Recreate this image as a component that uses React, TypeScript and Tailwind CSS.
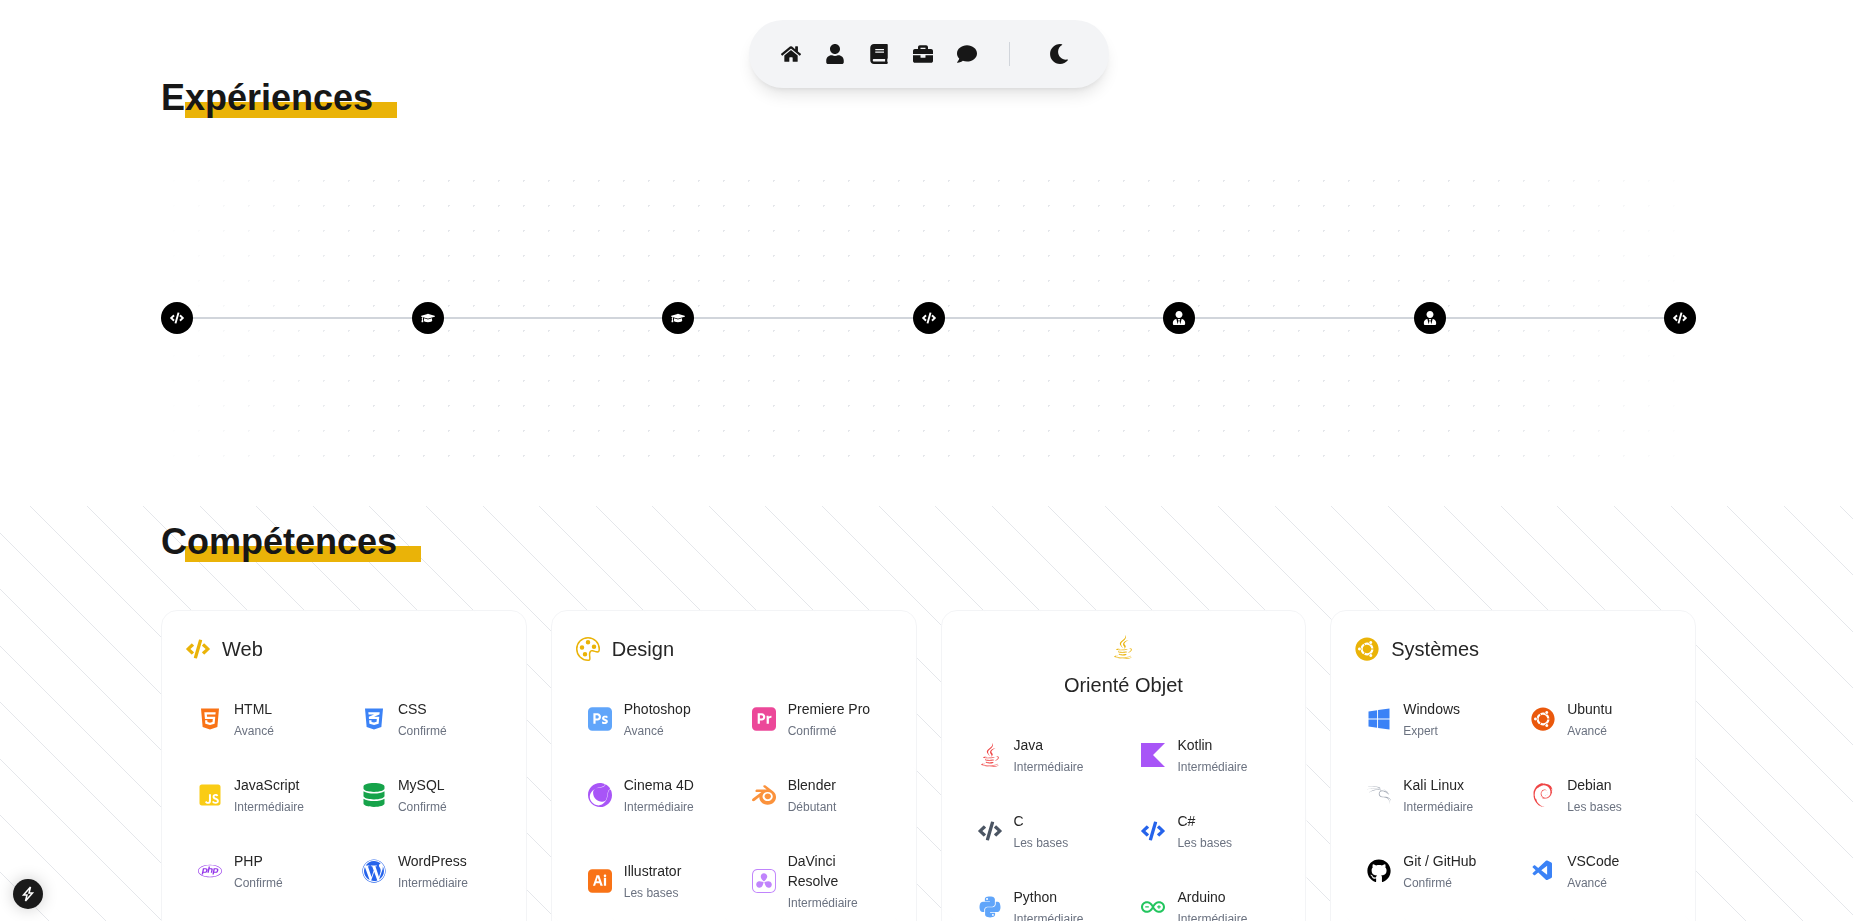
import type { ReactNode } from "react";
import {
  FaHome, FaUser, FaBook, FaBriefcase, FaComment, FaMoon, FaCode, FaGraduationCap, FaUserTie,
  FaJava, FaUbuntu, FaHtml5, FaCss3Alt, FaJsSquare, FaDatabase, FaPhp, FaWordpress,
  FaPython, FaWindows, FaGithub,
} from "react-icons/fa";
import { BsPalette } from "react-icons/bs";
import {
  SiAdobephotoshop, SiAdobepremierepro, SiCinema4D, SiBlender, SiAdobeillustrator, SiDavinciresolve,
  SiKotlin, SiArduino, SiKalilinux, SiDebian,
} from "react-icons/si";
import { VscVscode } from "react-icons/vsc";

type Skill = { name: string; level: string; icon: ReactNode };
type Group = { title: string; icon: ReactNode; stacked?: boolean; skills: Skill[] };

const groups: Group[] = [
  {
    title: "Web",
    icon: <FaCode />,
    skills: [
      { name: "HTML", level: "Avancé", icon: <FaHtml5 className="text-[#f97316]" /> },
      { name: "CSS", level: "Confirmé", icon: <FaCss3Alt className="text-[#3b82f6]" /> },
      { name: "JavaScript", level: "Intermédiaire", icon: <FaJsSquare className="text-[#facc15]" /> },
      { name: "MySQL", level: "Confirmé", icon: <FaDatabase className="text-[#16a34a]" /> },
      { name: "PHP", level: "Confirmé", icon: <FaPhp className="text-[#9333ea]" /> },
      { name: "WordPress", level: "Intermédiaire", icon: <FaWordpress className="text-[#2563eb]" /> },
    ],
  },
  {
    title: "Design",
    icon: <BsPalette />,
    skills: [
      { name: "Photoshop", level: "Avancé", icon: <SiAdobephotoshop className="text-[#60a5fa]" /> },
      { name: "Premiere Pro", level: "Confirmé", icon: <SiAdobepremierepro className="text-[#ec4899]" /> },
      { name: "Cinema 4D", level: "Intermédiaire", icon: <SiCinema4D className="text-[#a855f7]" /> },
      { name: "Blender", level: "Débutant", icon: <SiBlender className="text-[#fb923c]" /> },
      { name: "Illustrator", level: "Les bases", icon: <SiAdobeillustrator className="text-[#f97316]" /> },
      { name: "DaVinci Resolve", level: "Intermédiaire", icon: <SiDavinciresolve className="text-[#c084fc]" /> },
    ],
  },
  {
    title: "Orienté Objet",
    icon: <FaJava />,
    stacked: true,
    skills: [
      { name: "Java", level: "Intermédiaire", icon: <FaJava className="text-[#ef4444]" /> },
      { name: "Kotlin", level: "Intermédiaire", icon: <SiKotlin className="text-[#a855f7]" /> },
      { name: "C", level: "Les bases", icon: <FaCode className="text-[#4b5563]" /> },
      { name: "C#", level: "Les bases", icon: <FaCode className="text-[#2563eb]" /> },
      { name: "Python", level: "Intermédiaire", icon: <FaPython className="text-[#60a5fa]" /> },
      { name: "Arduino", level: "Intermédiaire", icon: <SiArduino className="text-[#22c55e]" /> },
    ],
  },
  {
    title: "Systèmes",
    icon: <FaUbuntu />,
    skills: [
      { name: "Windows", level: "Expert", icon: <FaWindows className="text-[#3b82f6]" /> },
      { name: "Ubuntu", level: "Avancé", icon: <FaUbuntu className="text-[#ea580c]" /> },
      { name: "Kali Linux", level: "Intermédiaire", icon: <SiKalilinux className="text-[#9ca3af]" /> },
      { name: "Debian", level: "Les bases", icon: <SiDebian className="text-[#ef4444]" /> },
      { name: "Git / GitHub", level: "Confirmé", icon: <FaGithub className="text-black" /> },
      { name: "VSCode", level: "Avancé", icon: <VscVscode className="text-[#3b82f6]" /> },
    ],
  },
];

const timeline = [
  <FaCode />, <FaGraduationCap />, <FaGraduationCap />, <FaCode />, <FaUserTie />, <FaUserTie />, <FaCode />,
];

function Heading({ children }: { children: string }) {
  return (
    <h2 className="relative inline-block h-10 text-[36px] leading-10 font-bold text-[#171717]">
      <span className="absolute left-6 -right-6 bottom-0 h-4 bg-[#eab308]" />
      <span className="relative">{children}</span>
    </h2>
  );
}

function Nav() {
  const items = [<FaHome />, <FaUser />, <FaBook />, <FaBriefcase />, <FaComment />];
  return (
    <nav className="absolute top-5 left-[749px] z-20 flex h-[68px] w-[360px] items-center rounded-full bg-[#f3f4f6] pl-5 shadow-[0_10px_15px_-3px_rgba(0,0,0,0.1),0_4px_6px_-4px_rgba(0,0,0,0.1)]">
      {items.map((icon, i) => (
        <span key={i} className="flex h-11 w-11 items-center justify-center text-xl text-[#171717]">
          {icon}
        </span>
      ))}
      <span className="ml-5 h-6 w-px bg-[#d1d5db]" />
      <span className="ml-[27px] flex h-11 w-11 items-center justify-center text-xl text-[#171717]">
        <FaMoon />
      </span>
    </nav>
  );
}

function Card({ group }: { group: Group }) {
  return (
    <div className="rounded-2xl border border-[#f3f4f6] bg-white/90 p-6 backdrop-blur-sm">
      <div className={group.stacked ? "mb-6 flex flex-col items-center gap-3" : "mb-6 flex items-center gap-3"}>
        <span className="text-2xl text-[#eab308]">{group.icon}</span>
        <h3 className="text-xl text-[#262626]">{group.title}</h3>
      </div>
      <div className="grid grid-cols-2 gap-3">
        {group.skills.map((s) => (
          <div key={s.name} className="flex items-center gap-3 p-3">
            <span className="shrink-0 text-2xl">{s.icon}</span>
            <div>
              <div className="text-sm text-[#262626]">{s.name}</div>
              <div className="mt-1 text-xs text-[#6b7280]">{s.level}</div>
            </div>
          </div>
        ))}
      </div>
    </div>
  );
}

export default function App() {
  return (
    <div className="relative h-[921px] overflow-hidden bg-white font-['Liberation_Sans',Arial,sans-serif]">
      <Nav />
      <section className="h-[506px] pr-[157px] pl-[161px] pt-[78px]">
        <Heading>Expériences</Heading>
        <div className="relative mt-[50px] flex h-[300px] items-center">
          <div className="absolute inset-0 bg-[radial-gradient(circle,#e5e7eb_1px,transparent_1px)] bg-[size:25px_25px] [mask-image:linear-gradient(to_right,transparent,black_14%,black_86%,transparent)]" />
          <div className="relative flex w-full items-center">
            {timeline.map((icon, i) => (
              <div key={i} className={i === 0 ? "flex items-center" : "flex flex-1 items-center"}>
                {i > 0 && <span className="h-0.5 flex-1 bg-[#d1d5db]" />}
                <span className="flex h-8 w-8 shrink-0 items-center justify-center rounded-full bg-black text-sm text-white">
                  {icon}
                </span>
              </div>
            ))}
          </div>
        </div>
      </section>
      <section className="h-[421.5px] bg-[repeating-linear-gradient(45deg,transparent,transparent_39.3px,#e5e7eb_39.3px,#e5e7eb_40px)] pr-[157px] pl-[161px] pt-4">
        <Heading>Compétences</Heading>
        <div className="mt-12 grid grid-cols-4 gap-6">
          {groups.map((g) => (
            <Card key={g.title} group={g} />
          ))}
        </div>
      </section>
      <div className="absolute bottom-3 left-[13px] z-20 flex h-[30px] w-[30px] items-center justify-center rounded-full bg-[#1a1a1a] text-white shadow-[0_0_16px_rgba(0,0,0,0.2)]">
        <svg width="14" height="16" viewBox="0 0 14 16" fill="none" stroke="currentColor" strokeWidth="1.5" strokeLinejoin="miter">
          <path d="M9.5 1 L2.5 9 H6 L4.5 15 L11.5 7 H8 Z" />
        </svg>
      </div>
    </div>
  );
}
